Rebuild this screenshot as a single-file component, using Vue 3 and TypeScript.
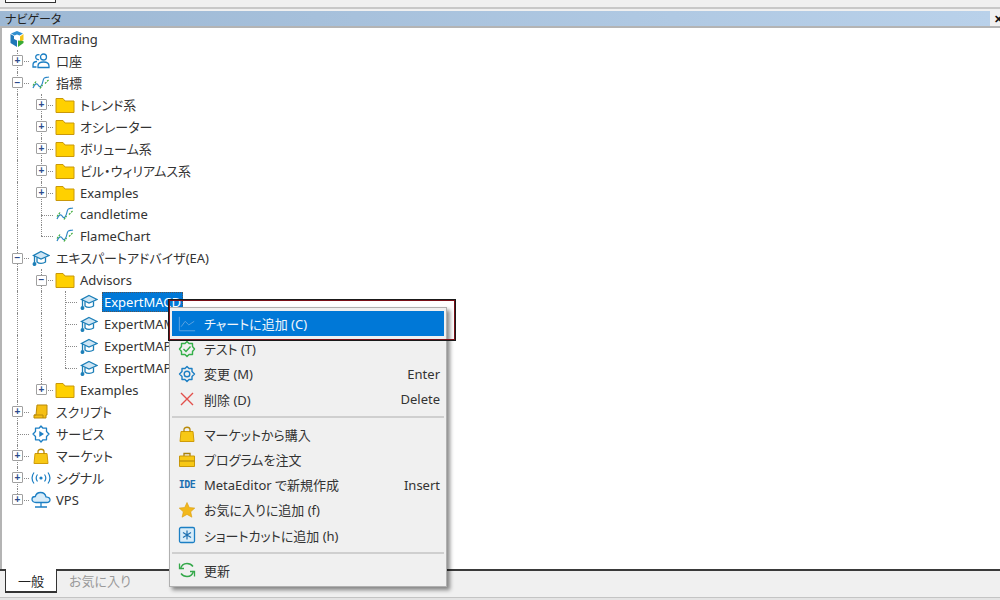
<template>
  <div class="window">
    <svg class="defs" width="0" height="0" aria-hidden="true">
      <symbol id="logo" viewBox="0 0 18 18">
        <path d="M9 1 15 3.5 11.500 5.500 9 4.500 6.500 5.500 3 3.500Z" fill="#2f8fd0" />
        <path d="M15.500 4V10L12 12V6.500Z" fill="#f5c518" />
        <path d="M2.500 4 6 6V9L9 10.500V17L2.500 13Z" fill="#1f78b8" />
        <path d="M10 10.500 15.500 11V13L10 17Z" fill="#3aaa35" />
      </symbol>
      <symbol id="users" viewBox="0 0 18 18" fill="none" stroke="#1c7fc4" stroke-width="1.300">
        <circle cx="11.500" cy="5" r="3" />
        <path d="M6 15.500V14C6 11.500 8.500 10 11.500 10S17 11.500 17 14V15.500Z" />
        <path d="M7 7.500A2.500 2.500 0 1 1 7.500 3M4.500 15H1V13C1 11 2.500 9.500 5 9.500" />
      </symbol>
      <symbol id="wave" viewBox="0 0 18 18" fill="none" stroke-width="1.200">
        <path d="M1 14C3 9 5 9 6.500 11.500S10 12 11 7 14 4 17 3" stroke="#2b86c5" />
        <path d="M1 11.500 4 7.500M8 14.500 10.500 11M13 9.500 16.500 6" stroke="#3aaa35" stroke-dasharray="2 1" />
      </symbol>
      <symbol id="folder" viewBox="0 0 20 18">
        <path d="M1 2.500H8L10 5H19V16.500H1Z" fill="#ffd000" stroke="#c9980a" />
      </symbol>
      <symbol id="cap" viewBox="0 0 18 18" fill="none" stroke="#1c7fb8" stroke-width="1.300">
        <path d="M9 2.500 17 6.500 9 10 1.500 6.500Z" fill="#cfe6f5" />
        <path d="M5 8.500V13C7 14.800 11 14.800 13.500 13V8.500" />
        <path d="M2.500 7V13.500" />
        <circle cx="2.500" cy="15" r="1.300" fill="#1c7fb8" />
      </symbol>
      <symbol id="script" viewBox="0 0 18 18">
        <path d="M5 2H15V12H14V15H2V12H4Z" fill="#f5bf14" stroke="#b98a08" />
        <path d="M2 12H11V15" fill="none" stroke="#b98a08" />
      </symbol>
      <symbol id="gear" viewBox="0 0 18 18" fill="none" stroke="#1c7fc4" stroke-width="1.400">
        <path d="M9 1.500 11 3.500H14V6.500L16.500 9 14 11.500V14.500H11L9 16.500 7 14.500H4V11.500L1.500 9 4 6.500V3.500H7Z" stroke-linejoin="round" />
        <circle cx="9" cy="9" r="2.800" />
      </symbol>
      <symbol id="service" viewBox="0 0 18 18" fill="none" stroke="#1c7fc4" stroke-width="1.300">
        <path d="M9 1 11 3.200H14.500V6.500L17 9 14.500 11.500V14.800H11L9 17 7 14.800H3.500V11.500L1 9 3.500 6.500V3.200H7Z" stroke-linejoin="round" />
        <path d="M7.300 6 12 9 7.300 12Z" fill="#1c7fc4" stroke="none" />
      </symbol>
      <symbol id="bag" viewBox="0 0 18 18">
        <path d="M3 6.500H15L16 16.500H2Z" fill="#f7c815" stroke="#d09c08" />
        <path d="M6 7V4.500C6 1.500 12 1.500 12 4.500V7" fill="none" stroke="#b98a08" stroke-width="1.300" />
      </symbol>
      <symbol id="signal" viewBox="0 0 22 18" fill="none" stroke="#1c7fc4" stroke-width="1.200">
        <circle cx="11" cy="9" r="1.600" fill="#1c7fc4" stroke="none" />
        <path d="M7.500 5.500C6 7.500 6 10.500 7.500 12.500M14.500 5.500C16 7.500 16 10.500 14.500 12.500" />
        <path d="M4 3.500C1.500 7 1.500 11 4 14.500M18 3.500C20.500 7 20.500 11 18 14.500" />
      </symbol>
      <symbol id="cloud" viewBox="0 0 20 18" fill="none" stroke="#1c7fc4" stroke-width="1.300">
        <path d="M5 11.500C2.500 11.500 1 10 1 8.300S2.500 5.500 4.300 5.500C5 3 7 1.500 9.500 1.500 12.500 1.500 14.500 3.500 15 5.800 17.300 6 19 7 19 8.800S17.500 11.500 15.500 11.500Z" fill="#d8ecf9" />
        <path d="M10 11.500V16M4 16H16" />
      </symbol>
      <symbol id="chart" viewBox="0 0 20 18" fill="none" stroke="#5aa2e0" stroke-width="1.100">
        <path d="M1.500 1V16.500H19" />
        <path d="M3.500 12 8 6 12 10 18 6" />
      </symbol>
      <symbol id="test" viewBox="0 0 18 18" fill="none" stroke="#35b04a" stroke-width="1.400">
        <path d="M9 1.500 11 3.500H14.500V6.500L16.500 9 14.500 11.500V14.500H11L9 16.500 7 14.500H3.500V11.500L1.500 9 3.500 6.500V3.500H7Z" stroke-linejoin="round" />
        <path d="M5.500 9 8 11.500 12.500 6.500" />
      </symbol>
      <symbol id="cross" viewBox="0 0 18 18" fill="none" stroke="#e2504c" stroke-width="1.400">
        <path d="M3 3 15 15M15 3 3 15" />
      </symbol>
      <symbol id="case" viewBox="0 0 18 18">
        <path d="M6 5V2.500H12V5" fill="none" stroke="#a9800a" stroke-width="1.300" />
        <path d="M1.500 5H16.500V15.500H1.500Z" fill="#f7c815" stroke="#c9980a" />
        <path d="M1.500 10H16.500" stroke="#a9800a" />
      </symbol>
      <symbol id="star" viewBox="0 0 18 18">
        <path d="M9 1.500 11.300 6.500 16.800 7.100 12.700 10.800 13.900 16.200 9 13.400 4.100 16.200 5.300 10.800 1.200 7.100 6.700 6.500Z" fill="#f2b81c" stroke="#d99c10" stroke-width=".6" />
      </symbol>
      <symbol id="shortcut" viewBox="0 0 18 18" fill="none">
        <rect x="1.500" y="1.500" width="15" height="15" rx="1.500" fill="#d8ecf9" stroke="#1c7fc4" stroke-width="1.300" />
        <path d="M9 4.500V13.500M5 6.500 13 11.500M13 6.500 5 11.500" stroke="#1c6fb0" stroke-width="1.200" />
      </symbol>
      <symbol id="refresh" viewBox="0 0 18 18" fill="none" stroke="#35a84a" stroke-width="1.400">
        <path d="M2.500 8C3.300 4.500 6 2.500 9 2.500 11.500 2.500 13.500 3.500 15 5.500" />
        <path d="M15.500 10C14.700 13.500 12 15.500 9 15.500 6.500 15.500 4.500 14.500 3 12.500" />
        <path d="M1.500 2.500V7.500H6M16.500 15.500V10.500H12" stroke-width="1.300" />
      </symbol>
    </svg>

    <div class="top-strip">
      <div class="top-tab"></div>
    </div>

    <div class="title-bar">
      <span class="title-text">ナビゲータ</span>
      <span class="title-close">✕</span>
    </div>

    <div class="tree">
      <div v-for="row in rows" :key="row.id" class="row">
        <span v-for="(cell, i) in row.cells" :key="i" class="cell" :class="cell.kind">
          <span v-if="cell.box" class="box">{{ cell.box === 'plus' ? '+' : '−' }}</span>
        </span>
        <span class="icon-cell">
          <svg class="icon" :width="row.iconWidth ?? 18" height="18"><use :href="'#' + row.icon" /></svg>
        </span>
        <span class="label" :class="{ selected: row.selected }">{{ row.label }}</span>
      </div>
    </div>

    <div class="tabs">
      <div class="tab active">一般</div>
      <div class="tab">お気に入り</div>
    </div>

    <div class="bottom-strip"></div>

    <div class="menu">
      <template v-for="item in menu" :key="item.label">
        <div v-if="item.label.startsWith('sep')" class="sep"></div>
        <div v-else class="item" :class="{ hot: item.hot }">
          <span class="item-icon">
            <span v-if="item.icon === 'ide'" class="ide">IDE</span>
            <svg v-else width="18" height="18"><use :href="'#' + item.icon" /></svg>
          </span>
          <span class="item-label">{{ item.label }}</span>
          <span class="shortcut">{{ item.key }}</span>
        </div>
      </template>
    </div>

    <div class="callout"></div>
  </div>
</template>

<script setup lang="ts">
type CellKind = 'line' | 'tee' | 'elbow'

interface Cell {
  kind: CellKind
  box?: 'plus' | 'minus'
}

interface Row {
  id: number
  label: string
  icon: string
  iconWidth?: number
  cells: Cell[]
  selected?: boolean
}

interface MenuItem {
  label: string
  icon?: string
  key?: string
  hot?: boolean
}

const line: Cell = { kind: 'line' }
const tee: Cell = { kind: 'tee' }
const elbow: Cell = { kind: 'elbow' }
const teePlus: Cell = { kind: 'tee', box: 'plus' }
const teeMinus: Cell = { kind: 'tee', box: 'minus' }
const elbowPlus: Cell = { kind: 'elbow', box: 'plus' }

const rows: Row[] = [
  { label: 'XMTrading', icon: 'logo', cells: [] },
  { label: '口座', icon: 'users', cells: [teePlus] },
  { label: '指標', icon: 'wave', cells: [teeMinus] },
  { label: 'トレンド系', icon: 'folder', iconWidth: 20, cells: [line, teePlus] },
  { label: 'オシレーター', icon: 'folder', iconWidth: 20, cells: [line, teePlus] },
  { label: 'ボリューム系', icon: 'folder', iconWidth: 20, cells: [line, teePlus] },
  { label: 'ビル・ウィリアムス系', icon: 'folder', iconWidth: 20, cells: [line, teePlus] },
  { label: 'Examples', icon: 'folder', iconWidth: 20, cells: [line, teePlus] },
  { label: 'candletime', icon: 'wave', cells: [line, tee] },
  { label: 'FlameChart', icon: 'wave', cells: [line, elbow] },
  { label: 'エキスパートアドバイザ(EA)', icon: 'cap', cells: [teeMinus] },
  { label: 'Advisors', icon: 'folder', iconWidth: 20, cells: [line, teeMinus] },
  { label: 'ExpertMACD', icon: 'cap', cells: [line, line, tee], selected: true },
  { label: 'ExpertMAMA', icon: 'cap', cells: [line, line, tee] },
  { label: 'ExpertMAPSAR', icon: 'cap', cells: [line, line, tee] },
  { label: 'ExpertMAPSARSizeOptimized', icon: 'cap', cells: [line, line, elbow] },
  { label: 'Examples', icon: 'folder', iconWidth: 20, cells: [line, elbowPlus] },
  { label: 'スクリプト', icon: 'script', cells: [teePlus] },
  { label: 'サービス', icon: 'service', cells: [tee] },
  { label: 'マーケット', icon: 'bag', cells: [teePlus] },
  { label: 'シグナル', icon: 'signal', iconWidth: 22, cells: [teePlus] },
  { label: 'VPS', icon: 'cloud', iconWidth: 20, cells: [elbowPlus] },
].map((r, id) => ({ ...r, id }))

const menu: MenuItem[] = [
  { label: 'チャートに追加 (C)', icon: 'chart', hot: true },
  { label: 'テスト (T)', icon: 'test' },
  { label: '変更 (M)', icon: 'gear', key: 'Enter' },
  { label: '削除 (D)', icon: 'cross', key: 'Delete' },
  { label: 'sep1' },
  { label: 'マーケットから購入', icon: 'bag' },
  { label: 'プログラムを注文', icon: 'case' },
  { label: 'MetaEditor で新規作成', icon: 'ide', key: 'Insert' },
  { label: 'お気に入りに追加 (f)', icon: 'star' },
  { label: 'ショートカットに追加 (h)', icon: 'shortcut' },
  { label: 'sep2' },
  { label: '更新', icon: 'refresh' },
]
</script>

<style>
html,
body {
  margin: 0;
  background: #fff;
}
</style>

<style scoped>
.window {
  position: relative;
  width: 1000px;
  height: 600px;
  overflow: hidden;
  display: flex;
  flex-direction: column;
  background: #f0f0f0;
  color: #333;
  font-family: "Noto Sans", "Noto Sans CJK JP", sans-serif;
  font-size: 13px;
  font-feature-settings: "palt";
}

.defs {
  position: absolute;
}

.top-strip {
  height: 7px;
  background: #f0f0f0;
  border-bottom: 2px solid #c8c8c8;
  flex: none;
}

.top-tab {
  width: 49px;
  height: 2px;
  margin-left: 5px;
  background: #fff;
  border: 1px solid #333;
  border-top: 0;
}

.title-bar {
  flex: none;
  height: 15px;
  margin-top: 2px;
  padding: 0 0 0 5px;
  display: flex;
  align-items: center;
  justify-content: space-between;
  background: linear-gradient(90deg, #9db8d4, #b9d1ea 990px, #f0f0f0 990px);
  border-bottom: 2px solid #b4b4b4;
  font-size: 12px;
  color: #222;
}

.title-close {
  width: 6px;
  overflow: hidden;
  font-size: 11px;
  font-weight: 700;
  color: #111;
}

.tree {
  flex: 1;
  min-height: 0;
  background: #fff;
  border-left: 2px solid #b4b4b4;
  padding: 0 0 0 3px;
}

.row {
  height: 21.95px;
  display: flex;
  align-items: center;
}

.cell,
.icon-cell {
  flex: none;
  width: 24px;
  height: 100%;
  display: flex;
  align-items: center;
  justify-content: center;
}

.cell {
  position: relative;
}

.cell.line::before,
.cell.tee::before {
  content: "";
  position: absolute;
  left: 12px;
  top: 0;
  bottom: 0;
  border-left: 1px dotted #8a8a8a;
}

.cell.elbow::before {
  content: "";
  position: absolute;
  left: 12px;
  top: 0;
  height: 11px;
  border-left: 1px dotted #8a8a8a;
}

.cell.tee::after,
.cell.elbow::after {
  content: "";
  position: absolute;
  left: 12px;
  right: 0;
  top: 11px;
  border-top: 1px dotted #8a8a8a;
}

.box {
  position: relative;
  z-index: 1;
  width: 9px;
  height: 9px;
  display: flex;
  align-items: center;
  justify-content: center;
  margin-left: 1px;
  background: #fff;
  border: 1px solid #a0a0a0;
  border-radius: 1px;
  font-family: "Liberation Sans", sans-serif;
  font-size: 10px;
  font-weight: 700;
  line-height: 1;
  color: #2b4a8c;
}

.icon {
  display: block;
}

.label {
  margin-left: 1px;
  padding: 0 2px;
  height: 20px;
  line-height: 20px;
  white-space: nowrap;
}

.label.selected {
  background: #0078d7;
  color: #fff;
  outline: 1px dotted #555;
  outline-offset: -1px;
}

.tabs {
  flex: none;
  height: 26px;
  display: flex;
  border-top: 2px solid #3a3a3a;
  margin-top: -1px;
  font-size: 13px;
}

.tab {
  height: 21px;
  padding: 0 12px;
  line-height: 21px;
  color: #9a9a9a;
}

.tab.active {
  width: 26px;
  margin: -2px 0 0 5px;
  height: 22px;
  text-align: center;
  color: #222;
  background: #fff;
  border: 1px solid #333;
  border-top: 0;
  border-bottom-width: 2px;
  line-height: 24px;
}

.bottom-strip {
  flex: none;
  height: 1px;
  background: #c4c4c4;
  border-bottom: 2px solid #e4e4e4;
}

.menu {
  position: absolute;
  left: 169px;
  top: 307px;
  width: 272px;
  padding: 3px 2px;
  background: #f0f0f0;
  border: 1px solid #b0b0b0;
  box-shadow: 3px 3px 4px rgba(0, 0, 0, 0.45);
}

.item {
  height: 25.2px;
  display: flex;
  align-items: center;
  padding-right: 4px;
}

.item.hot {
  background: #0078d7;
  color: #f2f6fb;
}

.item-icon {
  flex: none;
  width: 32px;
  display: flex;
  justify-content: center;
  padding-right: 2px;
  box-sizing: border-box;
}

.ide {
  font-family: "DejaVu Sans Mono", monospace;
  font-size: 10px;
  font-weight: 700;
  color: #1c6fb0;
  letter-spacing: -0.5px;
}

.item-label {
  flex: 1;
  white-space: nowrap;
}

.shortcut {
  white-space: nowrap;
}

.sep {
  height: 2px;
  margin: 4px 0;
  background: #cfcfcf;
}

.callout {
  position: absolute;
  left: 168px;
  top: 299px;
  width: 284px;
  height: 38px;
  border: 2px solid #7a1018;
  outline: 1px solid #1a1a1a;
  outline-offset: -1px;
}
</style>
